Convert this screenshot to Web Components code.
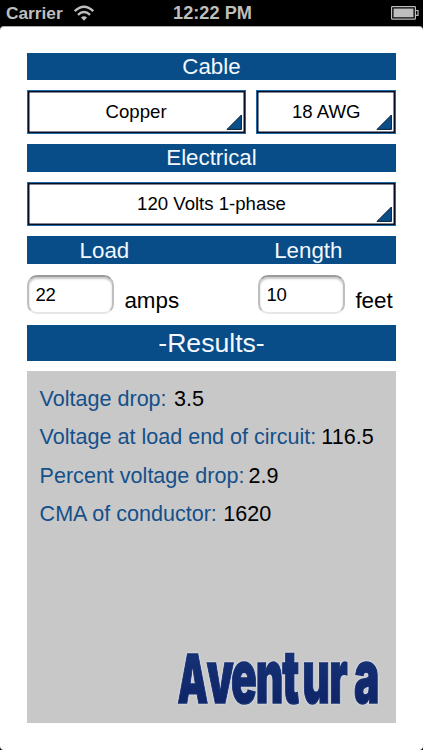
<!DOCTYPE html>
<html lang="en">
<head>
<meta charset="utf-8">
<title>Voltage Drop</title>
<style>
  body {
    margin: 0;
    background: #000;
    font-family: "Liberation Sans", Arial, sans-serif;
  }
</style>
</head>
<body>
<cable-calculator></cable-calculator>

<script>
class StatusBar extends HTMLElement {
  constructor() {
    super();
    this.attachShadow({ mode: "open" });
    this.shadowRoot.innerHTML = `
      <style>
        :host {
          display: grid;
          grid-template-columns: 1fr auto 1fr;
          align-items: center;
          height: 26px;
          padding: 0 4px 0 6px;
          background: #000;
          color: #bebebe;
          font-weight: bold;
          font-size: 18.2px;
          line-height: 26px;
        }
        .left {
          display: flex;
          align-items: center;
          gap: 10px;
          font-size: 17.3px;
        }
        .battery {
          justify-self: end;
        }
        svg {
          display: block;
        }
      </style>
      <div class="left">
        <span>Carrier</span>
        <svg width="22" height="16" viewBox="0 0 22 16" fill="none" stroke="#bebebe" stroke-width="2.4">
          <path d="M1.7 6.2 Q11 -2.8 20.3 6.2"/>
          <path d="M5 9.9 Q11 4.2 17 9.9"/>
          <path d="M11 15.8 L8 12.6 Q11 9.8 14 12.6 Z" fill="#bebebe" stroke="none"/>
        </svg>
      </div>
      <div class="time">12:22 PM</div>
      <svg class="battery" width="28" height="14" viewBox="0 0 28 14">
        <rect x=".6" y=".6" width="23.8" height="12.6" rx=".8" fill="none" stroke="#bebebe" stroke-width="1.2"/>
        <rect x="2.5" y="2.5" width="20" height="8.8" fill="#bebebe"/>
        <path d="M25 4.5 H27 V9.3 H25" fill="none" stroke="#bebebe" stroke-width="1.2"/>
      </svg>
    `;
  }
}

class SectionHeader extends HTMLElement {
  constructor() {
    super();
    this.attachShadow({ mode: "open" });
    this.shadowRoot.innerHTML = `
      <style>
        :host {
          display: flex;
          justify-content: center;
          align-items: center;
          box-sizing: border-box;
          background: #084d87;
          color: #f4f9ff;
          font-size: 22.3px;
          line-height: 28px;
        }
        :host([split]) {
          justify-content: space-between;
          padding: 1px 54px 0 53px;
        }
        :host([large]) {
          font-size: 26.6px;
        }
      </style>
      <slot></slot>
    `;
  }
}

class PickerButton extends HTMLElement {
  constructor() {
    super();
    this.attachShadow({ mode: "open" });
    this.shadowRoot.innerHTML = `
      <style>
        :host {
          display: flex;
          position: relative;
          justify-content: center;
          align-items: center;
          box-sizing: border-box;
          padding-bottom: 1px;
          border: 1px solid #1f69a6;
          box-shadow: inset 0 0 0 1.5px #060e25;
          background: #fff;
          color: #000;
          font-size: 18.6px;
        }
        svg {
          position: absolute;
          right: 3px;
          bottom: 3px;
        }
      </style>
      <slot></slot>
      <svg width="16" height="16" viewBox="0 0 16 16">
        <path d="M1 15.4 L15.4 1 V15.4 Z" fill="#0b4f8a" stroke="#071b30" stroke-width="1"/>
      </svg>
    `;
  }
}

class UnitField extends HTMLElement {
  constructor() {
    super();
    this.attachShadow({ mode: "open" });
    this.shadowRoot.innerHTML = `
      <style>
        :host {
          display: flex;
          gap: 10.8px;
          color: #000;
        }
        .box {
          display: flex;
          align-items: center;
          box-sizing: border-box;
          width: 87px;
          height: 39px;
          padding-left: 7px;
          border: 2px solid;
          border-color: #9b9b9b #bfbfbf #e6e6e6;
          border-radius: 10px;
          box-shadow: inset 0 2px 2px #c9c9c9;
          font-size: 18.5px;
          letter-spacing: -0.3px;
        }
        .unit {
          padding-top: 6px;
          font-size: 22.4px;
          line-height: 39px;
        }
      </style>
      <div class="box"><slot></slot></div>
      <span class="unit"><slot name="unit"></slot></span>
    `;
  }
}

class ResultRow extends HTMLElement {
  constructor() {
    super();
    this.attachShadow({ mode: "open" });
    this.shadowRoot.innerHTML = `
      <style>
        :host {
          display: flex;
          gap: var(--value-gap, 5px);
          height: 38.4px;
          color: #000;
          font-size: 21.55px;
          line-height: 38.4px;
          white-space: nowrap;
        }
        .label {
          color: #14508a;
        }
      </style>
      <span class="label"><slot name="label"></slot></span>
      <span><slot></slot></span>
    `;
  }
}

class BrandLogo extends HTMLElement {
  constructor() {
    super();
    this.attachShadow({ mode: "open" });
    this.shadowRoot.innerHTML = `
      <style>
        :host {
          display: block;
        }
        svg {
          display: block;
          filter: drop-shadow(0 0 1px #e6ebfa);
        }
      </style>
      <svg width="220" height="92" viewBox="0 0 220 92">
        <defs>
          <linearGradient id="ink" x1="0" y1="0" x2="0" y2="1">
            <stop offset="0" stop-color="#19367c"/>
            <stop offset="1" stop-color="#0c2263"/>
          </linearGradient>
        </defs>
        <text transform="translate(3.5 71.5) scale(.575 1)" y="0"
          x="0 51 93 136 182 217 264 307"
          font-family="Inter, sans-serif" font-weight="900" fill="url(#ink)"
          stroke="#142e70" stroke-width="1.4"
          font-size="74"><tspan font-size="67">A</tspan>ventura</text>
      </svg>
    `;
  }
}

class CableCalculator extends HTMLElement {
  constructor() {
    super();
    this.attachShadow({ mode: "open" });
    this.shadowRoot.innerHTML = `
      <style>
        :host {
          display: flex;
          flex-direction: column;
          height: 750px;
        }
        main {
          flex: 1;
          display: grid;
          grid-template-rows: 27px 44px 28px 44px 28px 41px 36px 352px;
          row-gap: 10px;
          box-sizing: border-box;
          padding: 26px 26.6px 0 26.6px;
          border-top: 1px solid #aaa;
          border-radius: 4px;
          background: #fff;
        }
        .pickers {
          display: grid;
          grid-template-columns: 219px 1fr;
          gap: 10.5px;
        }
        .fields {
          display: grid;
          grid-template-columns: 231px 1fr;
          padding-top: 1px;
        }
        .results {
          display: flex;
          flex-direction: column;
          box-sizing: border-box;
          padding: 9px 0 0 13px;
          background: #c8c8c8;
        }
        .drop {
          --value-gap: 7.5px;
        }
        .percent {
          --value-gap: 4px;
        }
        .cma {
          --value-gap: 6.5px;
        }
        brand-logo {
          margin: auto 0 0 134px;
        }
      </style>
      <status-bar></status-bar>
      <main>
        <section-header>Cable</section-header>
        <div class="pickers">
          <picker-button>Copper</picker-button>
          <picker-button>18 AWG</picker-button>
        </div>
        <section-header>Electrical</section-header>
        <picker-button>120 Volts 1-phase</picker-button>
        <section-header split><span>Load</span><span>Length</span></section-header>
        <div class="fields">
          <unit-field>22<span slot="unit">amps</span></unit-field>
          <unit-field>10<span slot="unit">feet</span></unit-field>
        </div>
        <section-header large>-Results-</section-header>
        <div class="results">
          <result-row class="drop"><span slot="label">Voltage drop:</span>3.5</result-row>
          <result-row><span slot="label">Voltage at load end of circuit:</span>116.5</result-row>
          <result-row class="percent"><span slot="label">Percent voltage drop:</span>2.9</result-row>
          <result-row class="cma"><span slot="label">CMA of conductor:</span>1620</result-row>
          <brand-logo></brand-logo>
        </div>
      </main>
    `;
  }
}

customElements.define("status-bar", StatusBar);
customElements.define("section-header", SectionHeader);
customElements.define("picker-button", PickerButton);
customElements.define("unit-field", UnitField);
customElements.define("result-row", ResultRow);
customElements.define("brand-logo", BrandLogo);
customElements.define("cable-calculator", CableCalculator);
</script>
</body>
</html>
